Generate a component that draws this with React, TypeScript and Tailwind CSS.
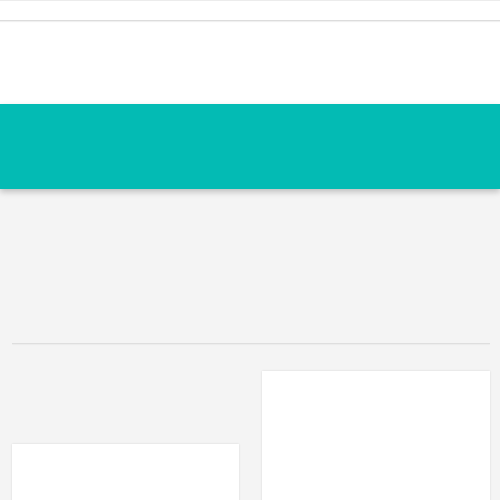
import React from "react";

function App() {
  return (
    <div className="w-[500px] h-[500px] overflow-hidden bg-[#f4f4f4]" style={{ fontFamily: "Roboto, sans-serif" }}>
      <header className="bg-white">
        <div className="h-[21px] border-t border-[#ececec] border-b border-b-[#dcdcdc] shadow-[0_1px_1px_rgba(0,0,0,0.06)]"></div>
        <div className="h-[83px]"></div>
      </header>
      <section className="relative h-[85px] bg-[#03bbb4] shadow-[0_3px_6px_rgba(0,0,0,0.22)]"></section>
      <main className="pl-[12px] pr-[10px] pt-[154px]">
        <hr className="border-0 h-px bg-[#dedede] shadow-[0_1px_1px_rgba(0,0,0,0.04)]" />
        <div className="grid grid-cols-[227px_1fr] gap-[23px] mt-[27px]">
          <div className="mt-[73px] h-[200px] bg-white shadow-[0_0_2px_rgba(0,0,0,0.12)]"></div>
          <div className="h-[200px] bg-white shadow-[0_0_2px_rgba(0,0,0,0.12)]"></div>
        </div>
      </main>
    </div>
  );
}

export default App;
